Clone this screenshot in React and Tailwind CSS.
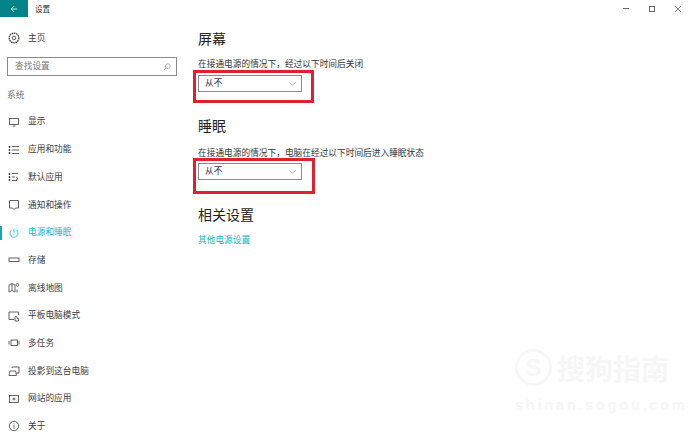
const cjk = { fontFamily: '"Noto Sans CJK SC", "Liberation Sans", sans-serif' };

function Icon({ children }) {
  return (
    <svg viewBox="0 0 12 12" className="w-3 h-3 shrink-0" fill="none" stroke="currentColor" strokeWidth="0.8">
      {children}
    </svg>
  );
}

const navItems = [
  { label: '显示', icon: <><rect x="1.5" y="2.5" width="9" height="6" /><path d="M4.5 10h3" /></> },
  { label: '应用和功能', icon: <><path d="M1.5 2v2M1.5 5v2M1.5 8v2" strokeWidth="1.4" /><path d="M4 2.5h7M4 6h7M4 9.5h7" /></> },
  { label: '默认应用', icon: <><path d="M1.5 2v2M1.5 5v2M1.5 8v2" strokeWidth="1.4" /><path d="M4 2.5h6M4 6h3M4 9.5h5M8 6l2 1.5-2 1.5" /></> },
  { label: '通知和操作', icon: <path d="M1.5 1.5h9v7.5H7.5L6 10.5 4.5 9h-3z" /> },
  { label: '电源和睡眠', active: true, icon: <><path d="M6 1.5v4" /><path d="M3.6 3a4 4 0 1 0 4.8 0" /></> },
  { label: '存储', icon: <rect x="1" y="4" width="10" height="3.5" /> },
  { label: '离线地图', icon: <><path d="M1 3l3-1.5L7 3v7L4 8.5 1 10zM4 1.5v7" /><path d="M9.5 1.5a1.3 1.3 0 0 1 1.3 1.3c0 .8-1.3 2-1.3 2s-1.300-1.200-1.300-2a1.300 1.300 0 0 1 1.300-1.300zM9 7.500v3" /></> },
  { label: '平板电脑模式', icon: <><path d="M6 9.500H1V2h9.500v3" /><path d="M7 11V7.500a1 1 0 0 1 2 0V8.500h1.500V11z" /></> },
  { label: '多任务', icon: <><rect x="3" y="3" width="6.500" height="5.500" /><path d="M1 4v3.500M11 4v3.500" /></> },
  { label: '投影到这台电脑', icon: <><path d="M4 3V2h7v6H8" /><path d="M1 10.500l1-4.500h5.500l1 4.500z" /></> },
  { label: '网站的应用', icon: <><rect x="1.500" y="2.500" width="9" height="7" /><path d="M6 4.500v3M4.500 6h3" /></> },
  { label: '关于', icon: <><circle cx="6" cy="6" r="4.700" /><path d="M6 5.200v3.300M6 3.500v.9" /></> },
];

function NavRow({ item }) {
  return (
    <div className={`relative h-[27.700px] flex items-center pl-[8px] gap-[8px] ${item.active ? 'text-[#12b5c4]' : 'text-[#3c3c3c]'}`}>
      {item.active && <div className="absolute left-0 top-[7px] w-[2px] h-[14px] bg-[#12a8b8]" />}
      <Icon>{item.icon}</Icon>
      <span>{item.label}</span>
    </div>
  );
}

function Select() {
  return (
    <div className="w-[104px] h-[17px] border border-[#8c8c8c] flex items-center justify-between pl-[6px] pr-[5px] text-[#333]">
      <span>从不</span>
      <svg viewBox="0 0 10 6" className="w-[7px] h-[4px]" fill="none" stroke="#777" strokeWidth="0.8">
        <path d="M0.500 0.500L5 5l4.500-4.500" />
      </svg>
    </div>
  );
}

export default function App() {
  return (
    <div className="relative w-[692px] h-[437px] bg-white overflow-hidden text-[8.700px] leading-none" style={cjk}>
      {/* title bar */}
      <div className="h-[17px] flex items-center text-[#333]">
        <div className="w-[28px] h-full bg-[#038387] flex items-center justify-center">
          <svg viewBox="0 0 10 10" className="w-[8px] h-[8px]" fill="none" stroke="#fff" strokeWidth="1">
            <path d="M9 5H1.500M5 1.500L1.500 5 5 8.500" />
          </svg>
        </div>
        <span className="ml-[7px] text-[7.500px]">设置</span>
        <div className="ml-auto flex items-center gap-[20px] pr-[11px] text-[#555]">
          <div className="w-[6px] h-px bg-[#666]" />
          <div className="w-[6px] h-[6px] border border-[#666]" />
          <svg viewBox="0 0 6 6" className="w-[6px] h-[6px]" stroke="#666" strokeWidth="0.8">
            <path d="M0 0l6 6M6 0L0 6" />
          </svg>
        </div>
      </div>

      <div className="flex">
        {/* sidebar */}
        <div className="w-[198px] shrink-0">
          <div className="h-[12px] mt-[15px] flex items-center pl-[8px] gap-[8px] text-[#3c3c3c]">
            <svg viewBox="0 0 12 12" className="w-3 h-3 shrink-0" fill="none" stroke="currentColor" strokeWidth="0.8">
              <circle cx="6" cy="6" r="1.800" />
              <circle cx="6" cy="6" r="4.800" strokeDasharray="1.500 0.700" strokeWidth="1.300" />
            </svg>
            <span>主页</span>
          </div>
          <div className="mt-[13px] ml-[7px] w-[170px] h-[19px] border border-[#8a8a8a] flex items-center justify-between pl-[7px] pr-[5px] text-[#777]">
            <span>查找设置</span>
            <svg viewBox="0 0 10 10" className="w-[8px] h-[8px]" fill="none" stroke="#888" strokeWidth="0.800">
              <circle cx="6" cy="4" r="3" />
              <path d="M3.800 6.200L1 9" />
            </svg>
          </div>
          <div className="mt-[15px] pl-[7px] h-[9px] text-[#777]">系统</div>
          <div className="mt-[8px]">
            {navItems.map((item) => (
              <NavRow key={item.label} item={item} />
            ))}
          </div>
        </div>

        {/* main */}
        <div className="flex-1 text-[#333]">
          <h2 className="mt-[13px] h-[16px] text-[14px] leading-[16px] text-[#222]">屏幕</h2>
          <p className="mt-[14px] h-[9px]">在接通电源的情况下，经过以下时间后关闭</p>
          <div className="mt-[6px]"><Select /></div>
          <h2 className="mt-[25px] h-[16px] text-[14px] leading-[16px] text-[#222]">睡眠</h2>
          <p className="mt-[16px] h-[9px]">在接通电源的情况下，电脑在经过以下时间后进入睡眠状态</p>
          <div className="mt-[5px]"><Select /></div>
          <h2 className="mt-[26px] h-[16px] text-[14px] leading-[16px] text-[#222]">相关设置</h2>
          <p className="mt-[14px] text-[#12b5c4]">其他电源设置</p>
        </div>
      </div>

      {/* red annotations */}
      <div className="absolute left-[193px] top-[70px] w-[121px] h-[33px] border-[3px] border-[#e0202f]" />
      <div className="absolute left-[193px] top-[158px] w-[122px] h-[36px] border-[3px] border-[#e0202f]" />

      {/* watermark */}
      <div className="absolute left-[515px] top-[349px] w-[165px] text-[#f6f6f6]">
        <div className="flex items-center gap-[5px]">
          <div className="w-[37px] h-[37px] rounded-full border-[3px] border-[#f6f6f6] flex items-center justify-center text-[24px] font-bold" style={{ fontFamily: '"Liberation Sans", sans-serif' }}>S</div>
          <span className="text-[28px] font-bold leading-none whitespace-nowrap">搜狗指南</span>
        </div>
        <div className="mt-[11px] text-[15px] font-bold tracking-[2.500px] whitespace-nowrap" style={{ fontFamily: '"Liberation Sans", sans-serif' }}>shinan.sogou.com</div>
      </div>
    </div>
  );
}
